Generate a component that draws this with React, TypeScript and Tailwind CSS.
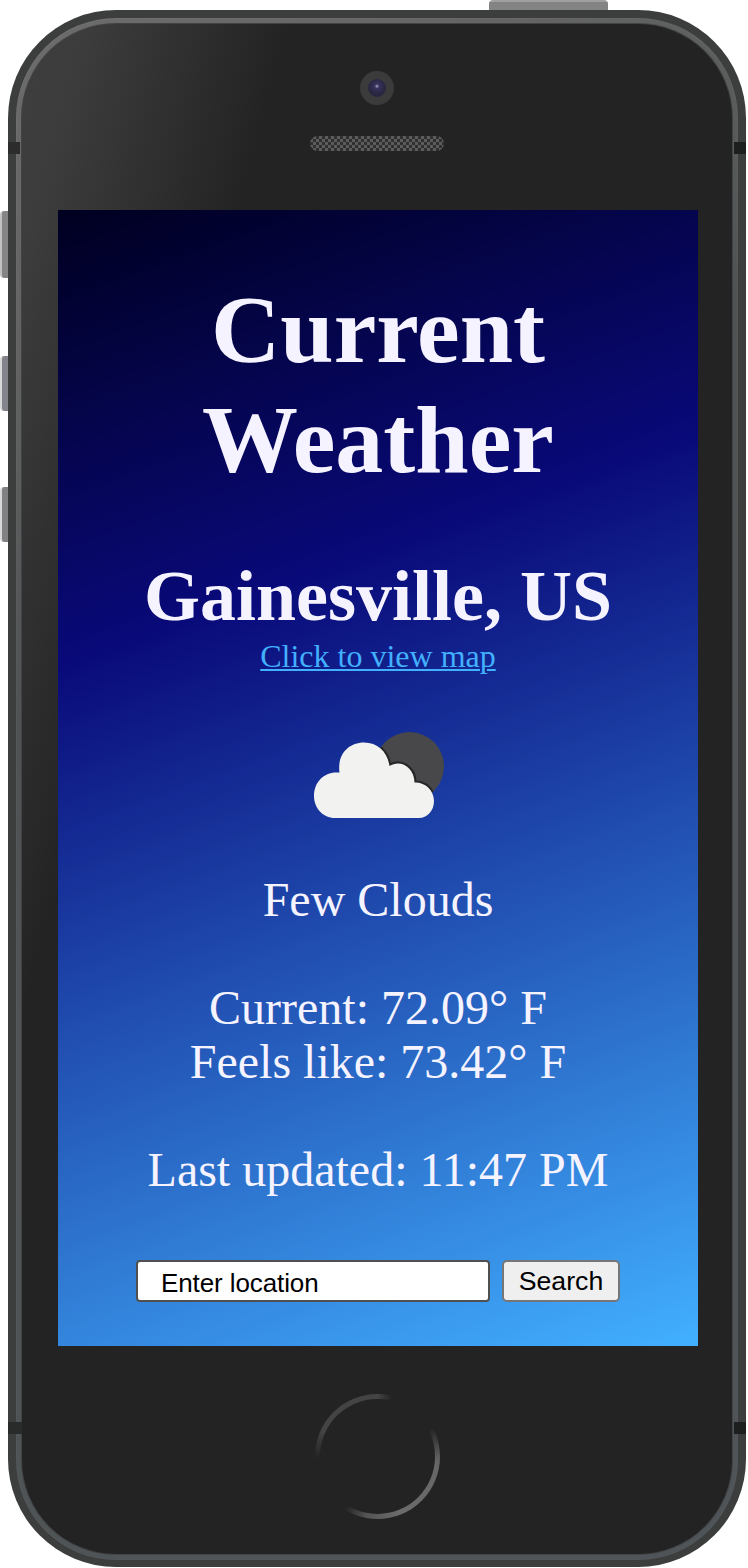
function Band({ className }: { className: string }) {
  return <div className={`absolute h-3 ${className}`} />;
}

function FewClouds() {
  return (
    <svg width="132" height="88" viewBox="0 0 132 88" className="block">
      <defs>
        <clipPath id="sun">
          <circle cx="96.5" cy="35.5" r="34.5" />
        </clipPath>
        <path
          id="cloud"
          d="M22 87C10 87 1 77 1 65C1 51 11 41.500 23 41.500L26.500 41.500C24 24 35 11.500 51 11.500C65 11.500 74.500 21 76.500 35C87 28 101.500 36 101.500 51.500C112 51 121 59 121 70C121 80 114 87 106 87Z"
        />
      </defs>
      <circle cx="96.5" cy="35.5" r="34.5" fill="#48484a" />
      <g clipPath="url(#sun)">
        <use href="#cloud" fill="#222" stroke="#262627" strokeWidth="4" />
      </g>
      <use href="#cloud" fill="#f2f2f0" />
    </svg>
  );
}

export default function App() {
  return (
    <div className="relative h-[1568px] w-[748px] overflow-hidden bg-white pl-2 pt-2.5">
      <div className="absolute left-[489px] top-0 h-3 w-[119px] rounded-t-[4px] bg-[linear-gradient(#a0a0a0_2px,#838383_2px)]" />
      <div className="absolute left-0 top-[211px] h-[67px] w-3 rounded-l-[4px] border-l-2 border-[#c2c2c2] bg-[#858585]" />
      <div className="absolute left-0 top-[356px] h-[55px] w-3 rounded-l-[4px] border-l-2 border-[#d8d8d8] bg-[#83838b]" />
      <div className="absolute left-0 top-[487px] h-[55px] w-3 rounded-l-[4px] border-l-2 border-[#d8d8d8] bg-[#818184]" />

      <div className="relative h-[1557px] w-[738px] rounded-[108px] bg-[#3c3e3d] px-2 pb-[7px] pt-2">
        <div className="h-full rounded-[100px] bg-[linear-gradient(150deg,#727272_0%,#686868_15%,#555859_35%,#50565a_100%)] p-px">
          <div className="h-full rounded-[99px] bg-[linear-gradient(150deg,#6c6c6c_0%,#646464_15%,#505354_35%,#4e5458_100%)] p-1">
            <div className="h-full rounded-[95px] bg-[#414344] p-px">
              <div className="flex h-full flex-col items-center rounded-[94px] bg-[#232323] bg-[linear-gradient(105deg,#3e3e3e_0%,#3c3c3c_6%,#232323_24%)]">
                <div className="mt-[47px] flex size-[34px] items-center justify-center rounded-full bg-[#3b3b3b]">
                  <div className="flex size-[18px] items-center justify-center rounded-full bg-[radial-gradient(circle_at_50%_40%,#a8a6c0_0%,#37345c_16%,#2a2745_50%,#242434_100%)]" />
                </div>
                <div className="mt-[31px] h-[15px] w-[134px] rounded-full bg-[#363636] bg-[conic-gradient(#5c5c5c_25%,#303030_0_50%,#5c5c5c_0_75%,#303030_0)] bg-[size:6px_6px]" />

                <main className="ml-0.5 mt-[59px] flex h-[1136px] w-[640px] flex-col items-center bg-[linear-gradient(160deg,#000020_0%,#090979_33%,#42b0ff_100%)] text-center font-['Liberation_Serif',serif] text-[#f5f3ff]">
                  <h1 className="mt-[65px] text-[96px] font-bold leading-[110px]">
                    Current
                    <br />
                    Weather
                  </h1>
                  <h2 className="mt-[60px] text-[72px] font-bold leading-[82px]">Gainesville, US</h2>
                  <a
                    href="#map"
                    className="mt-px text-[32px] leading-[36px] text-[#42b0ff] underline decoration-2 underline-offset-2"
                  >
                    Click to view map
                  </a>
                  <div className="ml-0.5 mt-[57px]">
                    <FewClouds />
                  </div>
                  <p className="mt-[54px] text-[48px] leading-[54px]">Few Clouds</p>
                  <p className="mt-[54px] text-[48px] leading-[54px]">
                    Current: 72.09° F<br />
                    Feels like: 73.42° F
                  </p>
                  <p className="mt-[54px] text-[48px] leading-[54px]">Last updated: 11:47 PM</p>
                  <form
                    className="mt-[63px] flex gap-3 font-['Liberation_Sans',sans-serif] text-black"
                    onSubmit={(e) => e.preventDefault()}
                  >
                    <input
                      placeholder="Enter location"
                      className="h-[42px] w-[354px] rounded-[4px] border-2 border-[#505050] bg-white px-[23px] pt-1 text-[26px] tracking-[-0.1px] placeholder:text-black"
                    />
                    <button className="h-[42px] w-[118px] rounded-[5px] border-2 border-[#767676] bg-[#efefef] text-[26.667px] leading-[36px]">
                      Search
                    </button>
                  </form>
                </main>

                <div className="mt-12 size-[125px] rounded-full bg-[conic-gradient(#444_0deg,#232323_14deg,#232323_62deg,#666_95deg,#6b6b6b_160deg,#555_190deg,#232323_212deg,#232323_268deg,#444_295deg,#444_360deg)] p-[5px]">
                  <div className="size-full rounded-full bg-[#232323]" />
                </div>
              </div>
            </div>
          </div>
        </div>
      </div>

      <Band className="left-2 top-[142px] w-3 bg-[#2c2c2c]" />
      <Band className="left-[734px] top-[142px] w-3 bg-[#1d1f1e]" />
      <Band className="left-2 top-[1422px] w-3.5 bg-[#292b2a]" />
      <Band className="left-[734px] top-[1422px] w-3 bg-[#1d1f1e]" />
    </div>
  );
}
